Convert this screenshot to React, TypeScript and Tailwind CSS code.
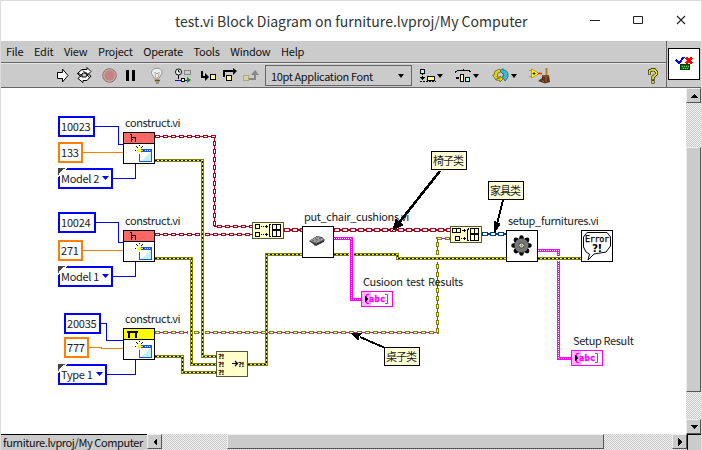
import React from "react";

const font = "font-['Noto_Sans_CJK_SC','Noto_Sans',sans-serif]";

/* ---------- wires ---------- */

const ErrorWire = ({ d }: { d: string }) => (
  <g fill="none">
    <path d={d} stroke="#808000" strokeWidth={3} />
    <path d={d} stroke="#ffff00" strokeWidth={1} />
    <path d={d} stroke="#000" strokeWidth={1} strokeDasharray="2 2" />
  </g>
);

const ClassWire = ({ d, line, box }: { d: string; line: string; box: string }) => (
  <g fill="none">
    <path d={d} stroke="#fff" strokeWidth={3} />
    <path d={d} stroke={line} strokeWidth={1} />
    <path d={d} stroke={box} strokeWidth={3} strokeDasharray="5 3" />
    <path d={d} stroke="#fff" strokeWidth={1} strokeDasharray="3 5" strokeDashoffset={-1} />
  </g>
);

const ArrayWire = ({ d, color }: { d: string; color: string }) => (
  <g fill="none">
    <path d={d} stroke={color} strokeWidth={2} />
    <path d={d} stroke={color} strokeWidth={4} strokeDasharray="6 2" />
    <path d={d} stroke="#fff" strokeWidth={2} strokeDasharray="4 4" strokeDashoffset={-1} />
  </g>
);

const StringWire = ({ d }: { d: string }) => (
  <g fill="none">
    <path d={d} stroke="#ff00ff" strokeWidth={3} />
    <path d={d} stroke="#fff" strokeWidth={1} strokeDasharray="1 1" />
  </g>
);

const Wires = () => (
  <svg className="absolute left-0 top-0" width="686" height="346" viewBox="0 88 686 346" shapeRendering="crispEdges">
    <g fill="none" stroke="#0000ff">
      <path d="M95 126.5H118.5V144.5H123M113 178.5H135.5V164" />
      <path d="M96 222.5H118.5V242.5H123M113 276.5H135.5V262" />
      <path d="M101 323.5H106.5V340.5H123M107 374.5H135.5V360" />
    </g>
    <path d="M83 152.5H123M83 250.5H123M89 347.5H101.5V348.5H123" fill="none" stroke="#ff8000" />
    <ClassWire d="M155 136.5H214.5V226.5H252" line="#b0001c" box="#b0001c" />
    <ClassWire d="M155 234.5H200M205 234.5H252" line="#b0001c" box="#b0001c" />
    <ClassWire d="M155 332.5H188M194 332.5H200M205 332.5H437.5V262" line="#d0106c" box="#808000" />
    <ClassWire d="M437.5 255V238.5H450" line="#d0106c" box="#808000" />
    <ErrorWire d="M155 160.5H202.5V356.5H216" />
    <ErrorWire d="M155 258.5H191.5V364.5H216" />
    <ErrorWire d="M155 356.5H182.5V372.5H216" />
    <ErrorWire d="M248 364.5H266.5V254.5H302" />
    <ErrorWire d="M334 254.5H349M354 254.5H397.5V258.5H506" />
    <ErrorWire d="M538 258.5H581" />
    <ArrayWire d="M284 230H302" color="#b0001c" />
    <ArrayWire d="M334 230H450" color="#b0001c" />
    <ArrayWire d="M482 234H506" color="#003f7f" />
    <StringWire d="M334 238.5H351.5V299.5H361" />
    <StringWire d="M538 250.5H558.5V256M558.5 261V358.5H571" />
  </svg>
);

const Arrows = () => (
  <svg className="absolute left-0 top-0" width="686" height="346" viewBox="0 88 686 346" shapeRendering="crispEdges">
    <g stroke="#000">
      <path d="M440 171L398 224" strokeWidth="2.6" />
      <path d="M393 230L396 219L399 222L403 225Z" />
      <path d="M503 200L497 224" strokeWidth="1.8" />
      <path d="M494 233L494 221L497 223L500 224Z" />
      <path d="M384 347.5L360 337" strokeWidth="2" />
      <path d="M351 333L362 333L359 336L358 340Z" />
    </g>
  </svg>
);

/* ---------- diagram nodes ---------- */

const Const = ({ at, color, children }: { at: string; color: string; children: React.ReactNode }) => (
  <div className={`absolute flex h-[21px] items-center whitespace-nowrap border-2 bg-white pl-px text-[11px] leading-[17px] tracking-[-0.2px] text-[#222] ${color} ${at}`}>
    {children}
  </div>
);

const Ring = ({ at, children }: { at: string; children: React.ReactNode }) => (
  <div className={`absolute flex h-[21px] items-center justify-between whitespace-nowrap border-2 border-[#0000ff] bg-white pl-px pr-[2px] text-[11px] leading-[17px] tracking-[-0.3px] text-[#222] ${at}`}>
    <svg width="9" height="9" viewBox="0 0 9 9" className="absolute -left-[2px] -top-[2px]" shapeRendering="crispEdges">
      <path d="M0 0H9L0 9Z" fill="#fff" />
      <path d="M0 0H8L4 2L2 4L0 8Z" fill="#444" />
    </svg>
    <span className="relative">{children}</span>
    <svg width="7" height="4" viewBox="0 0 7 4" className="-mt-px shrink-0"><path d="M0 0H7L3.500 4Z" fill="#0000ff" /></svg>
  </div>
);

const Label = ({ at, children }: { at: string; children: React.ReactNode }) => (
  <div className={`absolute whitespace-pre text-[11px] leading-[14px] text-[#222] ${at}`}>{children}</div>
);

const Note = ({ at, children }: { at: string; children: React.ReactNode }) => (
  <div className={`absolute flex h-[19px] w-[36px] items-center whitespace-nowrap border border-black bg-[#ffffd8] pl-px text-[11px] leading-[17px] tracking-[-1px] text-[#222] ${at}`}>
    {children}
  </div>
);

const ConstructVi = ({ at, table = false }: { at: string; table?: boolean }) => (
  <svg className={`absolute ${at}`} width="32" height="32" viewBox="0 0 32 32" shapeRendering="crispEdges">
    <rect x=".5" y=".5" width="31" height="31" fill="#fff" stroke="#000" />
    <rect x="1" y="1" width="30" height="10" fill={table ? "#ffff00" : "#ff6666"} />
    <path d="M1 11.500H31" stroke="#000" />
    {table ? (
      <path d="M4 3H15V5H14V10H12V5H7V10H5V5H4Z" fill="#000" />
    ) : (
      <path d="M7 2.500H8.500V10M8 5.500H13M12.500 5V10M9 7.500H10" stroke="#000" fill="none" />
    )}
    <rect x="16.500" y="18.500" width="12" height="11" fill="#fff" stroke="#1c58d0" />
    <path d="M18 29L28 20V29Z" fill="#c0f4f4" />
    <path d="M17 18.500H29" stroke="#1c58d0" strokeWidth="3" />
    <path d="M20 18.500H28" stroke="#ffff00" strokeDasharray="1 1" />
    <path d="M16.500 13V23M12 18.500H22M13 14L20 22M20 14L13 22" stroke="#000" strokeDasharray="1 1" />
    <path d="M16.500 15V22M14 18.500H20M14 16L19 21M19 16L14 21" stroke="#ffff00" />
  </svg>
);

const BuildArray = ({ at, grouped = false }: { at: string; grouped?: boolean }) => (
  <svg className={`absolute ${at}`} width="32" height="17" viewBox="0 0 32 17" shapeRendering="crispEdges">
    <rect x=".5" y=".5" width="31" height="16" fill="#ffffcc" stroke="#555533" />
    <g fill="none" stroke="#000">
      <path d={grouped ? "M2.500 2.500H10.500V6.500H2.500ZM6.500 2V7M5.500 10.500H9.500V14.500H5.500Z" : "M3.500 2.500H7.500V6.500H3.500ZM3.500 10.500H7.500V14.500H3.500Z"} />
      <path d={grouped ? "M12 4.500H16M11 12.500H16" : "M9 4.500H16M9 12.500H16"} strokeDasharray="1 1" />
      <path d="M14.500 3V6M13 4.500H16M14.500 11V14M13 12.500H16" />
      <path d={grouped ? "M18.500 2V3H17.500V14H18.500V15" : "M19 2.500H17.500V14.500H19"} />
      <path d="M20.500 2.500H28.500V14.500H20.500ZM24.500 2V15M20 8.500H29" />
    </g>
    <path d="M21 7.500H24M25 7.500H28" stroke="#000" />
  </svg>
);

const MergeErrors = () => (
  <svg className="absolute left-[216px] top-[263px]" width="32" height="26" viewBox="0 0 32 26">
    <rect x=".5" y=".5" width="31" height="25" fill="#ffffcc" stroke="#555533" />
    <g fontFamily="DejaVu Sans" fontSize="7" fontWeight="bold" letterSpacing="-.8">
      <text x="2" y="7.500">?!</text>
      <text x="2" y="15.500">?!</text>
      <text x="2" y="23.500">?!</text>
      <text x="22" y="15.500">?!</text>
    </g>
    <path d="M16 12.500H21M19 10L21.500 12.500L19 15" stroke="#000" strokeWidth="1.200" fill="none" />
  </svg>
);

const StringIndicator = ({ at }: { at: string }) => (
  <svg className={`absolute ${at}`} width="32" height="16" viewBox="0 0 32 16">
    <rect x=".5" y=".5" width="31" height="15" fill="#fff" stroke="#ff00ff" />
    <rect x="1" y="1" width="9" height="14" fill="#ffb3ff" />
    <path d="M8 3.500H5.500V12.500H8M24 3.500H26.500V12.500H24" stroke="#ff00ff" fill="none" />
    <text x="8" y="11" fontFamily="DejaVu Sans Mono" fontWeight="bold" fontSize="8.500" fill="#ff00ff" stroke="#ff00ff" strokeWidth=".4" textLength="16">abc</text>
    <path d="M4 4.500V11.500L7.500 8Z" fill="#000" />
  </svg>
);

const CushionVi = () => (
  <svg className="absolute left-[302px] top-[138px]" width="32" height="32" viewBox="0 0 32 32">
    <rect x=".5" y=".5" width="31" height="31" fill="#fff" stroke="#000" />
    <path d="M7 15L10 13L15 10L20 11L23 14L20 17L14 20L11 18Z" fill="#444" />
    <path d="M8 14.500L15 10.500L21 12.500L22 13.500L14 17.500L11 16Z" fill="#999" />
    <path d="M10 14L12 15M13 12.500L16 14M17 12L19 13M12 17L15 15.500" stroke="#666" />
    <path d="M12 19L22 15.500" stroke="#222" strokeDasharray="2 1" />
  </svg>
);

const SetupVi = () => (
  <svg className="absolute left-[506px] top-[142px]" width="32" height="32" viewBox="0 0 32 32">
    <rect x=".5" y=".5" width="31" height="31" fill="#fff" stroke="#000" />
    <g fill="#000">
      <circle cx="15.500" cy="7.500" r="2.200" /><circle cx="15.500" cy="23.500" r="2.200" />
      <circle cx="7.500" cy="15.500" r="2.200" /><circle cx="23.500" cy="15.500" r="2.200" />
      <circle cx="10" cy="10" r="2.400" /><circle cx="21" cy="10" r="2.400" />
      <circle cx="10" cy="21" r="2.400" /><circle cx="21" cy="21" r="2.400" />
      <circle cx="15.500" cy="15.500" r="7.500" />
    </g>
    <circle cx="15.500" cy="15.500" r="7" fill="#777" />
    <circle cx="15.500" cy="15.500" r="2.900" fill="#444" />
    <circle cx="15.500" cy="15.500" r="2.100" fill="#fff" />
    <rect x="14.500" y="14.500" width="2" height="2" fill="#77772a" />
  </svg>
);

const ErrorVi = () => (
  <svg className="absolute left-[581px] top-[142px]" width="32" height="32" viewBox="0 0 32 32">
    <rect x=".5" y=".5" width="31" height="31" fill="#fff" stroke="#000" />
    <path d="M6 2.500H26L29.500 7V16L25 22L13 24L7 30L8.500 24L5 22L2.500 17V7Z" fill="#fff" stroke="#000" />
    <text x="4" y="12" fontFamily="DejaVu Sans Mono" fontSize="8.500" stroke="#000" strokeWidth=".25" textLength="24">Error</text>
    <text x="11" y="21.500" fontFamily="DejaVu Sans" fontWeight="bold" fontSize="10.500" letterSpacing="-.6">?!</text>
  </svg>
);

/* ---------- chrome ---------- */

const Caret = () => (
  <svg width="6" height="4" viewBox="0 0 6 4"><path d="M0 0H6L3 4Z" fill="#000" /></svg>
);

const TitleBar = () => (
  <header className="relative flex h-[41px] items-center bg-white text-[#333]">
    <h1 className="ml-[174px] mt-[1px] w-[401px] whitespace-nowrap text-[14px] leading-[24px]">
      test.vi Block Diagram on furniture.lvproj/My Computer
    </h1>
    <svg className="ml-auto mr-[15px]" width="96" height="12" viewBox="0 0 96 12" fill="none" stroke="#222">
      <path d="M0 5.500H10M43.500 1.500H52.500V8.500H43.500Z" />
      <path d="M87 1L95 9M95 1L87 9" strokeWidth="1.100" />
    </svg>
  </header>
);

const menus = ["File", "Edit", "View", "Project", "Operate", "Tools", "Window", "Help"];

const RunIcons = () => (
  <svg width="208" height="22" viewBox="55 65 208 22">
    <path d="M57.500 72.500H62.500V69L68 75.500L62.500 82V78.500H57.500Z" fill="#fff" stroke="#000" />
    <g fill="#fff" stroke="#000" strokeLinejoin="round">
      <path d="M78 73L82 69.500H87V67.500L91 71.500L87 75.500V73H83L81 75Z" />
      <path d="M91 76L87 80.500H83V82.500L78 78.500L82 74.500V77H86L88 74Z" />
      <path d="M77 73L81 77M83 70.500L90 78" />
    </g>
    <circle cx="109.500" cy="75.500" r="6.800" fill="#c48484" stroke="#777" />
    <circle cx="109.500" cy="75.500" r="5.700" fill="none" stroke="#d8b0b0" />
    <path d="M126 70H129V81H126ZM132 70H135V81H132Z" fill="#000" />
    <path d="M154 78C153 75 151 74.500 151.500 72C152 67 162 67 162 72C162 75 160 75 159.500 78Z" fill="#eee" stroke="#999" />
    <path d="M155.500 77L155 72L157 74L159 72L158.500 77" fill="none" stroke="#aaa" />
    <path d="M154.500 79H159.500V82H154.500Z" fill="#b99545" /><path d="M155 80.500H160M156 83H159" stroke="#555" />
    <circle cx="178.500" cy="72" r="3" fill="#fff" stroke="#000" />
    <path d="M178.500 75V79M178.500 70V72H180" stroke="#000" fill="none" />
    <rect x="184.500" y="70.500" width="6" height="4" fill="none" stroke="#888" />
    <path d="M175 80.500H190" stroke="#0000ff" /><rect x="181.500" y="78.500" width="3" height="3" fill="#fff" stroke="#000" />
    <path d="M187 77L191 80L187 83Z" fill="#009c00" />
    <path d="M202 71V77H207" fill="none" stroke="#000" strokeWidth="2" /><path d="M205 73L209 77L205 81Z" />
    <rect x="210.500" y="74.500" width="5" height="5" fill="#ffff99" stroke="#000" />
    <path d="M224 77V71H234" fill="none" stroke="#000" strokeWidth="2" /><path d="M233 68L237 71L233 75Z" />
    <rect x="226.500" y="75.500" width="5" height="5" fill="#ffff99" stroke="#000" />
    <rect x="243.500" y="75.500" width="5" height="5" fill="#d4d4a0" stroke="#aaa888" />
    <path d="M249 79H255V74" fill="none" stroke="#888" strokeWidth="2" /><path d="M251 75L255 70L259 75Z" fill="#888" />
  </svg>
);

const AlignIcon = () => (
  <svg width="16" height="14" viewBox="1 0 16 14" fill="none" stroke="#000" shapeRendering="crispEdges">
    <rect x="1.500" y=".5" width="4" height="4" fill="#9ff" /><path d="M3.500 5V11" strokeDasharray="1 1" />
    <path d="M1 8H6L3.500 11Z" fill="#000" stroke="none" /><path d="M1 12.500H17" strokeDasharray="2 1" />
    <rect x="8.500" y="7.500" width="7" height="4" fill="#ffff99" />
  </svg>
);

const DistributeIcon = () => (
  <svg width="17" height="14" viewBox="0 0 17 14" fill="none" stroke="#000" shapeRendering="crispEdges">
    <path d="M0 3.500L2.500 1.500H14L16.500 3.500" /><path d="M1 8H4V10H1Z" fill="#000" stroke="none" />
    <rect x="5.500" y="5.500" width="3" height="7" fill="#ffff99" /><rect x="10.500" y="8.500" width="4" height="4" fill="#9ff" />
    <path d="M8.500 2V0" />
  </svg>
);

const ReorderIcon = () => (
  <svg width="17" height="15" viewBox="0 0 17 15" strokeLinejoin="round">
    <path d="M8 1L3 3L2 7H.500L4 12L7.500 9H5L6 5L9 4Z" fill="#ddd024" stroke="#777000" strokeWidth=".8" />
    <path d="M4 11L8 10V8L11 11L8 14V12.500L4 12Z" fill="#ddd024" stroke="#777000" strokeWidth=".8" />
    <path d="M8 3L11 .5V2C15 2 16 4 16 9L13 13L10 8H12L11 5V6Z" fill="#44b8cc" stroke="#126878" strokeWidth=".8" />
  </svg>
);

const CleanIcon = () => (
  <svg width="22" height="16" viewBox="0 0 22 16">
    <path d="M0 2.500H3M0 8.500H3" stroke="#ff8000" />
    <path d="M2.500 .8L10 5.500L2.500 10Z" fill="#ffff33" stroke="#c49c00" />
    <path d="M5 4V7M3.500 5.500H6.500" stroke="#000" strokeWidth=".8" /><path d="M9 5.500H13" stroke="#d22" strokeWidth="1.500" />
    <path d="M16.500 0H18.500V7H16.500Z" fill="#b87832" /><path d="M13 7H20L21 14L16 15.500L9 13L13 10Z" fill="#5a351c" />
    <path d="M13 8H20M13 12L15 14M17 9V14" stroke="#a06a30" />
  </svg>
);

const ViIcon = () => (
  <svg width="32" height="32" viewBox="0 0 32 32" shapeRendering="crispEdges">
    <rect x=".5" y=".5" width="31" height="31" fill="#fff" stroke="#000" />
    <path d="M8 12L11 15L16 9" fill="none" stroke="#0000ff" strokeWidth="2" />
    <path d="M18 9.500L24 15.500M24 9.500L18 15.500" stroke="#ff0000" strokeWidth="2.400" />
    <rect x="12.500" y="16.500" width="9" height="5" fill="#087408" stroke="#063c06" />
    <path d="M14 18.500H21M15 20.500H21" stroke="#7ccc7c" strokeDasharray="1 1" />
  </svg>
);

const raised = "border border-t-[#eee] border-l-[#eee] border-r-[#555] border-b-[#555] bg-[#cbcbcb]";
const dither = "bg-[repeating-conic-gradient(#c8c8c8_0_25%,#f2f2f2_0_50%)] bg-[length:2px_2px]";

const ScrollButton = ({ d, size }: { d: string; size: string }) => (
  <div className={`flex shrink-0 items-center justify-center ${raised} ${size}`}>
    <svg width="8" height="8" viewBox="0 0 8 8" shapeRendering="crispEdges"><path d={d} fill="#000" /></svg>
  </div>
);

export default function App() {
  return (
    <div className={`flex h-[450px] w-[702px] flex-col overflow-hidden border-x border-t border-[#dcdcdc] bg-white ${font}`}>
      <div className="-mt-px shrink-0"><TitleBar /></div>

      <div className="flex h-[47px] shrink-0 bg-[#cbcbcb]">
        <div className="flex w-[666px] flex-col border-r border-[#666]">
          <nav className="flex h-[22px] items-center gap-[10.6px] border-b border-[#666] pb-[2px] pl-[5px] text-[11px] leading-[18px] tracking-[-0.24px] text-[#111]">
            {menus.map((m) => <span key={m}>{m}</span>)}
          </nav>
          <div className="flex h-[25px] items-center border-b border-t border-b-[#666] border-t-[#e4e4e4] pl-[54px]">
            <RunIcons />
            <div className="ml-[2px] flex h-[21px] w-[147px] items-center justify-between border border-[#666] pl-[5px] pr-[7px] text-[11px] leading-[18px] tracking-[-0.38px] text-[#111]">
              <span className="whitespace-nowrap">10pt Application Font</span>
              <Caret />
            </div>
            <div className="ml-[8px] flex items-center gap-[1px]"><AlignIcon /><Caret /></div>
            <div className="ml-[12px] flex items-center gap-[1px]"><DistributeIcon /><Caret /></div>
            <div className="ml-[13px] flex items-center gap-[2px]"><ReorderIcon /><Caret /></div>
            <div className="ml-[12px]"><CleanIcon /></div>
            <svg className="ml-auto mr-[7px]" width="12" height="16" viewBox="0 0 12 16" fill="none" strokeLinecap="square">
              <path d="M2.500 5V3L5 1.800H7.500L9.500 4V6L6 9V10.500M6 13.800V14" stroke="#000" strokeWidth="3" />
              <path d="M2.500 5V3L5 1.800H7.500L9.500 4V6L6 9V10.500M6 13.800V14" stroke="#f4ec00" strokeWidth="1.800" />
            </svg>
          </div>
        </div>
        <div className="flex flex-1 items-start border-b border-[#666] pl-px pt-[7px]"><ViIcon /></div>
      </div>

      <div className="flex h-[346px] shrink-0">
        <main className="relative w-[685px] overflow-hidden bg-white">
          <div className="absolute -left-px top-0 h-[346px] w-[686px]">
            <Wires />

            <Const at="left-[58px] top-[28px] w-[37px]" color="border-[#0000ff]">10023</Const>
            <Const at="left-[58px] top-[54px] w-[25px]" color="border-[#ff8000]">133</Const>
            <Ring at="left-[58px] top-[80px] w-[55px]">Model 2</Ring>
            <Label at="left-[125px] top-[27px] tracking-[-0.38px]">construct.vi</Label>
            <ConstructVi at="left-[123px] top-[44px]" />

            <Const at="left-[58px] top-[124px] w-[38px]" color="border-[#0000ff]">10024</Const>
            <Const at="left-[58px] top-[152px] w-[25px]" color="border-[#ff8000]">271</Const>
            <Ring at="left-[58px] top-[178px] w-[55px]">Model 1</Ring>
            <Label at="left-[125px] top-[125px] tracking-[-0.38px]">construct.vi</Label>
            <ConstructVi at="left-[123px] top-[142px]" />

            <Const at="left-[64px] top-[225px] w-[37px]" color="border-[#0000ff]">20035</Const>
            <Const at="left-[64px] top-[249px] w-[25px]" color="border-[#ff8000]">777</Const>
            <Ring at="left-[58px] top-[276px] w-[49px]">Type 1</Ring>
            <Label at="left-[125px] top-[223px] tracking-[-0.38px]">construct.vi</Label>
            <ConstructVi at="left-[123px] top-[240px]" table />

            <BuildArray at="left-[252px] top-[134px]" />
            <BuildArray at="left-[450px] top-[138px]" grouped />
            <MergeErrors />
            <Label at="left-[304px] top-[121px] tracking-[-0.37px]">put_chair_cushions.vi</Label>
            <CushionVi />
            <Label at="left-[363px] top-[186px] tracking-[-0.3px] [word-spacing:1.5px]">Cusioon test Results</Label>
            <StringIndicator at="left-[361px] top-[203px]" />
            <Label at="left-[508px] top-[125px] tracking-[-0.33px]">setup_furnitures.vi</Label>
            <SetupVi />
            <ErrorVi />
            <Label at="left-[573px] top-[245px] tracking-[-0.35px]">Setup Result</Label>
            <StringIndicator at="left-[571px] top-[262px]" />

            <Arrows />
            <Note at="left-[431px] top-[63px]">椅子类</Note>
            <Note at="left-[488px] top-[93px]">家具类</Note>
            <Note at="left-[384px] top-[259px]">桌子类</Note>
          </div>
        </main>
        <div className={`flex w-[15px] flex-col ${dither}`}>
          <ScrollButton size="h-[15px] w-[15px]" d="M4 2L8 6H0Z" />
          <div className="h-[44px]" />
          <div className={`h-[245px] ${raised}`} />
          <div className="flex-1" />
          <ScrollButton size="h-[15px] w-[15px]" d="M0 2H8L4 6Z" />
        </div>
      </div>

      <footer className={`flex h-[16px] shrink-0 ${dither}`}>
        <div className="w-[146px] shrink-0 border-t border-black bg-[#cbcbcb] pl-[2px] text-[11px] leading-[15px] tracking-[-0.4px] text-[#111]">
          <span className="whitespace-nowrap">furniture.lvproj/My Computer</span>
        </div>
        <ScrollButton size="h-[15px] w-[15px]" d="M6 0V8L2 4Z" />
        <div className="w-[65px]" />
        <div className={`h-[15px] w-[377px] ${raised}`} />
        <div className="flex-1" />
        <ScrollButton size="h-[15px] w-[15px]" d="M2 0V8L6 4Z" />
        <div className="w-[14px] border-l border-t border-black bg-[#cbcbcb]" />
      </footer>
    </div>
  );
}
